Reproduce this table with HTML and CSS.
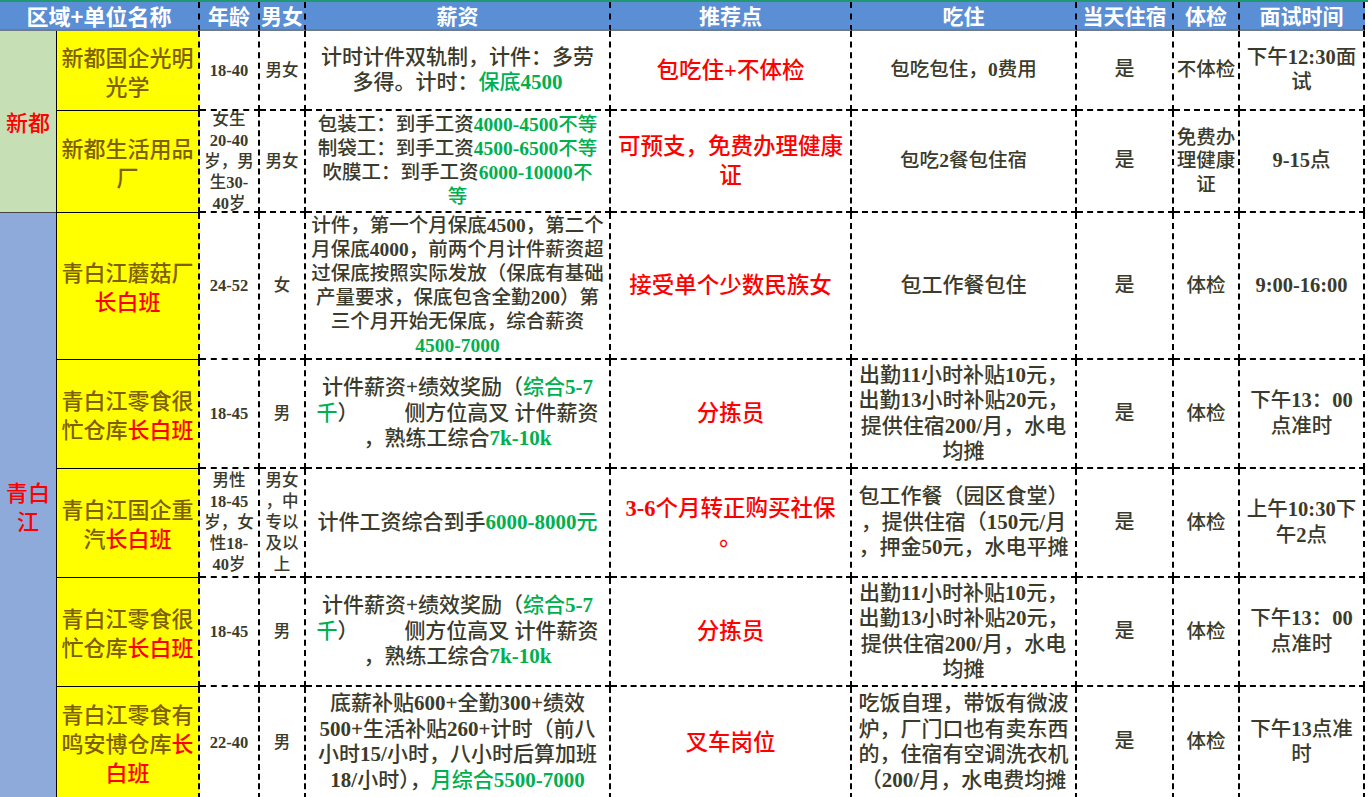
FILE: index.html
```html
<!DOCTYPE html>
<html lang="zh-CN">
<head>
<meta charset="utf-8">
<title>招聘信息表</title>
<link rel="stylesheet" href="styles.css">
</head>
<body>
<div class="sheet">
  <div class="hd hd-name"><p>区域+单位名称</p></div>
  <div class="hd"><p>年龄</p></div>
  <div class="hd"><p>男女</p></div>
  <div class="hd"><p>薪资</p></div>
  <div class="hd"><p>推荐点</p></div>
  <div class="hd"><p>吃住</p></div>
  <div class="hd"><p>当天住宿</p></div>
  <div class="hd"><p>体检</p></div>
  <div class="hd"><p>面试时间</p></div>

  <div class="region region-xd"><p>新都</p></div>
  <div class="region region-qbj"><p>青白<br>江</p></div>

  <!-- row 1 -->
  <div class="unit"><p>新都国企光明<br>光学</p></div>
  <div class="c age"><p><span class="n">18-40</span></p></div>
  <div class="c sex"><p>男女</p></div>
  <div class="c pay"><p>计时计件双轨制，计件：多劳<br>多得。计时：<span class="g">保底<span class="n">4500</span></span></p></div>
  <div class="c rec"><p>包吃住<span class="n">+</span>不体检</p></div>
  <div class="c food food-s"><p>包吃包住，<span class="n">0</span>费用</p></div>
  <div class="c same"><p>是</p></div>
  <div class="c hc"><p>不体检</p></div>
  <div class="c iv"><p>下午<span class="n">12:30</span>面<br>试</p></div>

  <!-- row 2 -->
  <div class="unit"><p>新都生活用品<br>厂</p></div>
  <div class="c age"><p>女生<br><span class="n">20-40</span><br>岁，男<br>生<span class="n">30-</span><br><span class="n">40</span>岁</p></div>
  <div class="c sex"><p>男女</p></div>
  <div class="c pay pay-s"><p>包装工：到手工资<span class="g"><span class="n">4000-4500</span>不等</span><br>制袋工：到手工资<span class="g"><span class="n">4500-6500</span>不等</span><br>吹膜工：到手工资<span class="g"><span class="n">6000-10000</span>不<br>等</span></p></div>
  <div class="c rec"><p>可预支，免费办理健康<br>证</p></div>
  <div class="c food food-s"><p>包吃<span class="n">2</span>餐包住宿</p></div>
  <div class="c same"><p>是</p></div>
  <div class="c hc"><p>免费办<br>理健康<br>证</p></div>
  <div class="c iv"><p><span class="n">9-15</span>点</p></div>

  <!-- row 3 -->
  <div class="unit"><p>青白江蘑菇厂<br><span class="r">长白班</span></p></div>
  <div class="c age"><p><span class="n">24-52</span></p></div>
  <div class="c sex"><p>女</p></div>
  <div class="c pay pay-s"><p>计件，第一个月保底<span class="n">4500</span>，第二个<br>月保底<span class="n">4000</span>，前两个月计件薪资超<br>过保底按照实际发放（保底有基础<br>产量要求，保底包含全勤<span class="n">200</span>）第<br>三个月开始无保底，综合薪资<br><span class="g n">4500-7000</span></p></div>
  <div class="c rec"><p>接受单个少数民族女</p></div>
  <div class="c food"><p>包工作餐包住</p></div>
  <div class="c same"><p>是</p></div>
  <div class="c hc"><p>体检</p></div>
  <div class="c iv"><p><span class="n">9:00-16:00</span></p></div>

  <!-- row 4 -->
  <div class="unit"><p>青白江零食很<br>忙仓库<span class="r">长白班</span></p></div>
  <div class="c age"><p><span class="n">18-45</span></p></div>
  <div class="c sex"><p>男</p></div>
  <div class="c pay"><p>计件薪资<span class="n">+</span>绩效奖励（<span class="g">综合<span class="n">5-7</span><br>千</span>）<span class="gap"></span>侧方位高叉 计件薪资<br>，熟练工综合<span class="g n">7k-10k</span></p></div>
  <div class="c rec"><p>分拣员</p></div>
  <div class="c food"><p>出勤<span class="n">11</span>小时补贴<span class="n">10</span>元，<br>出勤<span class="n">13</span>小时补贴<span class="n">20</span>元，<br>提供住宿<span class="n">200/</span>月，水电<br>均摊</p></div>
  <div class="c same"><p>是</p></div>
  <div class="c hc"><p>体检</p></div>
  <div class="c iv"><p>下午<span class="n">13</span>：<span class="n">00</span><br>点准时</p></div>

  <!-- row 5 -->
  <div class="unit"><p>青白江国企重<br>汽<span class="r">长白班</span></p></div>
  <div class="c age"><p>男性<br><span class="n">18-45</span><br>岁，女<br>性<span class="n">18-</span><br><span class="n">40</span>岁</p></div>
  <div class="c sex"><p>男女<br>，中<br>专以<br>及以<br>上</p></div>
  <div class="c pay"><p>计件工资综合到手<span class="g"><span class="n">6000-8000</span>元</span></p></div>
  <div class="c rec"><p><span class="n">3-6</span>个月转正购买社保<br>。</p></div>
  <div class="c food"><p>包工作餐（园区食堂）<br>，提供住宿（<span class="n">150</span>元<span class="n">/</span>月<br>，押金<span class="n">50</span>元，水电平摊</p></div>
  <div class="c same"><p>是</p></div>
  <div class="c hc"><p>体检</p></div>
  <div class="c iv"><p>上午<span class="n">10:30</span>下<br>午<span class="n">2</span>点</p></div>

  <!-- row 6 -->
  <div class="unit"><p>青白江零食很<br>忙仓库<span class="r">长白班</span></p></div>
  <div class="c age"><p><span class="n">18-45</span></p></div>
  <div class="c sex"><p>男</p></div>
  <div class="c pay"><p>计件薪资<span class="n">+</span>绩效奖励（<span class="g">综合<span class="n">5-7</span><br>千</span>）<span class="gap"></span>侧方位高叉 计件薪资<br>，熟练工综合<span class="g n">7k-10k</span></p></div>
  <div class="c rec"><p>分拣员</p></div>
  <div class="c food"><p>出勤<span class="n">11</span>小时补贴<span class="n">10</span>元，<br>出勤<span class="n">13</span>小时补贴<span class="n">20</span>元，<br>提供住宿<span class="n">200/</span>月，水电<br>均摊</p></div>
  <div class="c same"><p>是</p></div>
  <div class="c hc"><p>体检</p></div>
  <div class="c iv"><p>下午<span class="n">13</span>：<span class="n">00</span><br>点准时</p></div>

  <!-- row 7 -->
  <div class="unit"><p>青白江零食有<br>鸣安博仓库<span class="r">长</span><br><span class="r">白班</span></p></div>
  <div class="c age"><p><span class="n">22-40</span></p></div>
  <div class="c sex"><p>男</p></div>
  <div class="c pay"><p>底薪补贴<span class="n">600+</span>全勤<span class="n">300+</span>绩效<br><span class="n">500+</span>生活补贴<span class="n">260+</span>计时（前八<br>小时<span class="n">15/</span>小时，八小时后算加班<br><span class="n">18/</span>小时），<span class="g">月综合<span class="n">5500-7000</span></span></p></div>
  <div class="c rec"><p>叉车岗位</p></div>
  <div class="c food"><p>吃饭自理，带饭有微波<br>炉，厂门口也有卖东西<br>的，住宿有空调洗衣机<br>（<span class="n">200/</span>月，水电费均摊</p></div>
  <div class="c same"><p>是</p></div>
  <div class="c hc"><p>体检</p></div>
  <div class="c iv"><p>下午<span class="n">13</span>点准<br>时</p></div>
</div>
</body>
</html>
```

FILE: styles.css
```css
html, body {
  margin: 0;
  padding: 0;
  background: #ffffff;
}

body {
  font-family: "Liberation Serif", "Noto Sans CJK SC", serif;
  font-weight: 500;
  color: #3b3b2b;
}

p {
  margin: 0;
}

.n {
  font-weight: 700;
}

.sheet {
  width: 1368px;
  height: 797px;
  overflow: hidden;
  border-top: 2px solid #1f9a70;
  box-sizing: border-box;
  display: grid;
  grid-template-columns: 56px 144px 60px 46px 305px 241px 225px 97px 66px 125px;
  grid-template-rows: 29px 80px 102px 147px 109px 109px 109px 112px;
}

.sheet > div {
  box-sizing: border-box;
  display: flex;
  align-items: center;
  justify-content: center;
  text-align: center;
  white-space: nowrap;
  overflow: hidden;
}

/* header */
.sheet > .hd {
  background: #5a8ed5;
  color: #ffffff;
  font-family: "Noto Sans CJK SC", sans-serif;
  font-weight: 700;
  font-size: 21px;
  line-height: 27px;
  overflow: visible;
  border-right: 2px dashed #000000;
  border-bottom: 2px solid #6f7b88;
}

.sheet > .hd-name {
  grid-column: span 2;
  font-size: 22px;
}

/* region column */
.region {
  grid-column: 1;
  color: #ff0000;
  font-family: "Noto Sans CJK SC", sans-serif;
  font-size: 22px;
  line-height: 29px;
}

.region-xd {
  grid-row: 2 / span 2;
  background: #c6dfb4;
  border-bottom: 1px solid #444444;
}

.region-qbj {
  grid-row: 4 / span 5;
  background: #8eaadb;
}

/* unit name */
.unit {
  background: #ffff00;
  color: #7f6000;
  font-family: "Noto Sans CJK SC", sans-serif;
  font-size: 22px;
  line-height: 29px;
  border-left: 1px solid #000000;
  border-bottom: 1px solid #000000;
  border-right: 2px dashed #000000;
}

.r {
  color: #ff0000;
}

.g {
  color: #00b050;
}

/* data cells */
.c {
  border-right: 2px dashed #000000;
  border-bottom: 2px dashed #000000;
  font-size: 21px;
  line-height: 25.5px;
}

.age,
.sex {
  font-size: 16.5px;
  line-height: 21px;
}

.pay-s {
  font-size: 19.5px;
  line-height: 24px;
}

.rec {
  color: #ff0000;
  font-size: 22.5px;
  line-height: 29px;
}

.food-s {
  font-size: 19.5px;
}

.same {
  font-size: 20px;
}

.hc {
  font-size: 19.5px;
  line-height: 23.5px;
}

.iv {
  font-size: 20.5px;
  line-height: 25.5px;
}

.gap {
  display: inline-block;
  width: 46px;
}
```
